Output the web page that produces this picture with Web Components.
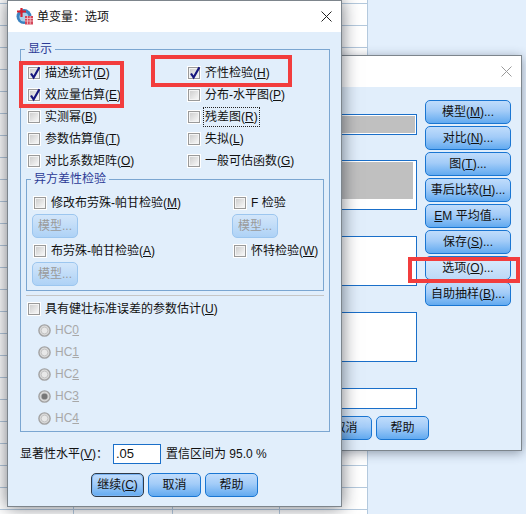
<!DOCTYPE html>
<html>
<head>
<meta charset="utf-8">
<title>单变量：选项</title>
<style>
    html, body { margin: 0; height: 100%; }
    body {
        width: 526px;
        height: 514px;
        overflow: hidden;
        position: relative;
        font: 12px/16px "Liberation Sans", "Noto Sans CJK SC", sans-serif;
        color: #111;
    }
</style>
</head>
<body>
<data-sheet></data-sheet>

<spss-window style="left:140px; top:55px; width:382px; height:396px; --shadow:0 2px 10px rgba(40,50,70,.45)" muted>
    <back-content></back-content>
</spss-window>

<spss-window style="left:7px; top:0; width:335px; height:507px; --shadow:0 0 16px rgba(20,25,35,.6)" icon>
    <span slot="title">单变量：选项</span>
    <options-content></options-content>
</spss-window>

<red-mark style="left:19px; top:61px; width:105px; height:47px"></red-mark>
<red-mark style="left:151px; top:55px; width:141px; height:32px"></red-mark>
<red-mark style="left:408px; top:257px; width:112px; height:26px"></red-mark>

<script>
//Hoja de fondo
class DataSheet extends HTMLElement {
    connectedCallback() {
        const shadowRoot = this.attachShadow({ mode: 'open' });
        shadowRoot.innerHTML = `
            <style>
                :host { position: absolute; inset: 0; display: block; background: #e3effc; }
                .cells {
                    width: 367px;
                    height: 100%;
                    background-color: #fff;
                    background-image:
                        linear-gradient(#b4c9dd 1px, transparent 1px),
                        linear-gradient(90deg, #b4c9dd 1px, transparent 1px),
                        linear-gradient(90deg, #b4c9dd 1px, transparent 1px),
                        linear-gradient(90deg, #b4c9dd 1px, transparent 1px);
                    background-size: 100% 22px, 1px 100%, 1px 100%, 1px 100%;
                    background-position: 0 3px, 73px 0, 172px 0, 279px 0;
                    background-repeat: repeat, no-repeat, no-repeat, no-repeat;
                    border-right: 1px solid #b4c9dd;
                }
            </style>
            <div class="cells"></div>
        `;
    }
}
customElements.define("data-sheet", DataSheet);

//Ventana
class SpssWindow extends HTMLElement {
    connectedCallback() {
        const icon = this.hasAttribute('icon') ? `
            <svg class="icon" width="17" height="17" viewBox="0 0 17 17">
                <circle cx="8" cy="8.5" r="7.5" fill="#3b82c0"/>
                <circle cx="8" cy="9" r="4.6" fill="#a9cfea"/>
                <path d="M5.5 0v9M1 3.5h9" stroke="#d5202f" stroke-width="2.2"/>
                <rect x="9" y="8" width="8" height="8.5" fill="#d4475a"/>
                <path d="M9 10.5h8M9 13h8M11.5 8v8.5M14.2 8v8.5" stroke="#f6c6cc" stroke-width=".8"/>
            </svg>` : '';
        const shadowRoot = this.attachShadow({ mode: 'open' });
        shadowRoot.innerHTML = `
            <style>
                :host {
                    position: absolute;
                    box-sizing: border-box;
                    display: flex;
                    flex-direction: column;
                    background: #e1eefb;
                    border: 1px solid #7d858c;
                    box-shadow: var(--shadow);
                }
                header {
                    height: 31px;
                    flex: none;
                    background: #fff;
                    display: flex;
                    align-items: center;
                    gap: 4px;
                    padding: 0 9px 0 8px;
                    font-size: 12px;
                }
                .grow { flex: 1; }
                .close { stroke: #222; }
                :host([muted]) .close { stroke: #9a9a9a; }
                main { flex: 1; min-height: 0; }
            </style>
            <header>
                ${icon}
                <slot name="title"></slot>
                <span class="grow"></span>
                <svg class="close" width="11" height="11" viewBox="0 0 11 11"><path d="M.5.5l10 10M10.5.5l-10 10" fill="none"/></svg>
            </header>
            <main><slot></slot></main>
        `;
    }
}
customElements.define("spss-window", SpssWindow);

//Boton
class SpssButton extends HTMLElement {
    connectedCallback() {
        const shadowRoot = this.attachShadow({ mode: 'open' });
        shadowRoot.innerHTML = `
            <style>
                :host {
                    box-sizing: border-box;
                    display: flex;
                    align-items: center;
                    justify-content: center;
                    height: 24px;
                    width: var(--w, 86px);
                    border: 1px solid #1a76d2;
                    border-radius: 5px;
                    background: linear-gradient(#c0dcfb, #a3ccf8 45%, #62aaf0);
                    white-space: nowrap;
                    color: #111;
                }
                :host([soft]) { background: linear-gradient(#dcecfc, #bcd9f7); }
                :host([primary]) { border: 1px solid #2e3a48; box-shadow: inset 0 0 0 1px #7db5f3; }
                :host([disabled]) {
                    border-color: #9cc6ef;
                    background: linear-gradient(#d3e6fa, #aed2f6);
                    color: #9a9a9a;
                }
            </style>
            <slot></slot>
        `;
    }
}
customElements.define("spss-button", SpssButton);

//Casilla
class SpssCheck extends HTMLElement {
    connectedCallback() {
        const mark = this.hasAttribute('checked')
            ? '<path d="M4 7.5l2.6 4L12.4 1.2" fill="none" stroke="#16167e" stroke-width="2.2"/>' : '';
        const shadowRoot = this.attachShadow({ mode: 'open' });
        shadowRoot.innerHTML = `
            <style>
                :host { display: flex; align-items: center; height: 22px; white-space: nowrap; }
                svg { flex: none; margin-right: 4px; }
                span { display: inline-block; padding: 1px 0; }
                :host([focused]) span { outline: 1px dotted #222; padding: 1px 1px; margin-left: -1px; }
            </style>
            <svg width="14" height="14" viewBox="0 0 14 14">
                <defs><linearGradient id="g" x1="0" y1="0" x2="1" y2="1"><stop offset="0" stop-color="#cfcfcf"/><stop offset="1" stop-color="#f6f6f6"/></linearGradient></defs>
                <rect width="14" height="14" fill="#fff"/>
                <rect x="1.5" y="1.5" width="11" height="11" fill="#f4f4f4" stroke="#9a9a9a"/>
                <rect x="3" y="3" width="8" height="8" fill="url(#g)"/>
                ${mark}
            </svg>
            <span><slot></slot></span>
        `;
    }
}
customElements.define("spss-check", SpssCheck);

//Radio deshabilitado
class SpssRadio extends HTMLElement {
    connectedCallback() {
        const dot = this.hasAttribute('checked') ? '<circle cx="6.5" cy="6.5" r="3" fill="#777"/>' : '';
        const shadowRoot = this.attachShadow({ mode: 'open' });
        shadowRoot.innerHTML = `
            <style>
                :host { display: flex; align-items: center; height: 22px; gap: 4px; color: #a8a8a8; }
                svg { flex: none; }
            </style>
            <svg width="13" height="13" viewBox="0 0 13 13">
                <circle cx="6.5" cy="6.5" r="5.6" fill="#dadada" stroke="#a2a2a2" stroke-width="1.4"/>
                <circle cx="6.5" cy="6.5" r="3.4" fill="#e8e8e8" stroke="#c4c4c4"/>
                ${dot}
            </svg>
            <span><slot></slot></span>
        `;
    }
}
customElements.define("spss-radio", SpssRadio);

//Grupo
class SpssGroup extends HTMLElement {
    connectedCallback() {
        const shadowRoot = this.attachShadow({ mode: 'open' });
        shadowRoot.innerHTML = `
            <style>
                :host { display: block; }
                fieldset {
                    margin: 0;
                    padding: var(--pad, 5px 5px 2px);
                    border: 1px solid #7ba6d1;
                    min-width: 0;
                }
                legend {
                    margin-left: var(--legend-x, -1px);
                    padding: 0 3px;
                    line-height: 16px;
                    color: #2c3a96;
                }
            </style>
            <fieldset>
                <legend><slot name="legend"></slot></legend>
                <slot></slot>
            </fieldset>
        `;
    }
}
customElements.define("spss-group", SpssGroup);

//Contenido del dialogo Opciones
class OptionsContent extends HTMLElement {
    connectedCallback() {
        const shadowRoot = this.attachShadow({ mode: 'open' });
        shadowRoot.innerHTML = `
            <style>
                :host { display: block; padding: 9px 11px 0 12px; }
                .display {
                    display: grid;
                    grid-template-columns: 160px 1fr;
                    margin-left: 1px;
                }
                .hetero {
                    --pad: 5px 0 2px 6px;
                    --legend-x: -2px;
                    margin-top: -1px;
                }
                .hetero-grid {
                    display: grid;
                    grid-template-columns: 200px 1fr;
                }
                .hetero-grid spss-button { --w: 46px; margin-left: -1px; }
                .hetero-grid .cell { height: 48px; }
                .rule { height: 1px; background: #c6c6c6; margin: 4px 0 2px; }
                .robust { margin-left: 1px; }
                .radios { margin: -1px 0 0 12px; }
                .level {
                    display: flex;
                    align-items: center;
                    height: 20px;
                    margin-top: 12px;
                }
                .level .label { width: 93px; white-space: nowrap; }
                .input {
                    box-sizing: border-box;
                    width: 48px;
                    height: 20px;
                    border: 1px solid #1a6fc9;
                    background: #fff;
                    padding: 1px 0 0 2px;
                    margin-right: 5px;
                    font-size: 13px;
                }
                .actions {
                    display: flex;
                    justify-content: center;
                    gap: 4px;
                    margin: 9px 0 0 -1px;
                    --w: 53px;
                }
            </style>
            <spss-group>
                <span slot="legend">显示</span>
                <div class="display">
                    <spss-check checked>描述统计(<u>D</u>)</spss-check>
                    <spss-check checked>齐性检验(<u>H</u>)</spss-check>
                    <spss-check checked>效应量估算(<u>E</u>)</spss-check>
                    <spss-check>分布-水平图(<u>P</u>)</spss-check>
                    <spss-check>实测幂(<u>B</u>)</spss-check>
                    <spss-check focused>残差图(<u>R</u>)</spss-check>
                    <spss-check>参数估算值(<u>T</u>)</spss-check>
                    <spss-check>失拟(<u>L</u>)</spss-check>
                    <spss-check>对比系数矩阵(<u>O</u>)</spss-check>
                    <spss-check>一般可估函数(<u>G</u>)</spss-check>
                </div>
                <spss-group class="hetero">
                    <span slot="legend">异方差性检验</span>
                    <div class="hetero-grid">
                        <div class="cell">
                            <spss-check>修改布劳殊-帕甘检验(<u>M</u>)</spss-check>
                            <spss-button disabled>模型...</spss-button>
                        </div>
                        <div class="cell">
                            <spss-check>F 检验</spss-check>
                            <spss-button disabled>模型...</spss-button>
                        </div>
                        <div class="cell">
                            <spss-check>布劳殊-帕甘检验(<u>A</u>)</spss-check>
                            <spss-button disabled>模型...</spss-button>
                        </div>
                        <div class="cell">
                            <spss-check>怀特检验(<u>W</u>)</spss-check>
                        </div>
                    </div>
                </spss-group>
                <div class="rule"></div>
                <spss-check class="robust">具有健壮标准误差的参数估计(<u>U</u>)</spss-check>
                <div class="radios">
                    <spss-radio>HC<u>0</u></spss-radio>
                    <spss-radio>HC<u>1</u></spss-radio>
                    <spss-radio>HC<u>2</u></spss-radio>
                    <spss-radio checked>HC<u>3</u></spss-radio>
                    <spss-radio>HC<u>4</u></spss-radio>
                </div>
            </spss-group>
            <div class="level">
                <span class="label">显著性水平(<u>V</u>)：</span>
                <span class="input">.05</span>
                <span>置信区间为 95.0 %</span>
            </div>
            <div class="actions">
                <spss-button primary>继续(<u>C</u>)</spss-button>
                <spss-button>取消</spss-button>
                <spss-button>帮助</spss-button>
            </div>
        `;
    }
}
customElements.define("options-content", OptionsContent);

//Contenido del dialogo Univariante
class BackContent extends HTMLElement {
    connectedCallback() {
        const shadowRoot = this.attachShadow({ mode: 'open' });
        shadowRoot.innerHTML = `
            <style>
                :host { display: block; padding-top: 13px; }
                .top { display: flex; justify-content: flex-end; gap: 8px; padding-right: 10px; }
                .lists { width: 260px; padding-top: 14px; }
                .box {
                    box-sizing: border-box;
                    border: 1px solid #1a6fc9;
                    background: #fff;
                    height: 50px;
                    margin-bottom: 26px;
                    padding: 1px;
                }
                .box.one { height: 21px; margin-bottom: 25px; }
                .box.last { height: 21px; margin-bottom: 0; }
                .box.one div { height: 17px; background: #c0c0c0; }
                .box.two div { height: 37px; background: #c0c0c0; margin-right: 2px; }
                .buttons { display: flex; flex-direction: column; gap: 2px; }
                .footer { display: flex; justify-content: flex-end; gap: 4px; padding: 7px 92px 0 0; --w: 53px; }
            </style>
            <div class="top">
                <div class="lists">
                    <div class="box one"><div></div></div>
                    <div class="box two"><div></div></div>
                    <div class="box"></div>
                    <div class="box"></div>
                    <div class="box last"></div>
                </div>
                <div class="buttons">
                    <spss-button>模型(<u>M</u>)...</spss-button>
                    <spss-button>对比(<u>N</u>)...</spss-button>
                    <spss-button>图(<u>T</u>)...</spss-button>
                    <spss-button>事后比较(<u>H</u>)...</spss-button>
                    <spss-button><u>E</u>M 平均值...</spss-button>
                    <spss-button>保存(<u>S</u>)...</spss-button>
                    <spss-button soft>选项(<u>O</u>)...</spss-button>
                    <spss-button>自助抽样(<u>B</u>)...</spss-button>
                </div>
            </div>
            <div class="footer">
                <spss-button>取消</spss-button>
                <spss-button>帮助</spss-button>
            </div>
        `;
    }
}
customElements.define("back-content", BackContent);

//Recuadro rojo
class RedMark extends HTMLElement {
    connectedCallback() {
        const shadowRoot = this.attachShadow({ mode: 'open' });
        shadowRoot.innerHTML = `
            <style>
                :host {
                    position: absolute;
                    box-sizing: border-box;
                    display: block;
                    border: 4px solid #f23d3d;
                }
            </style>
        `;
    }
}
customElements.define("red-mark", RedMark);
</script>
</body>
</html>
